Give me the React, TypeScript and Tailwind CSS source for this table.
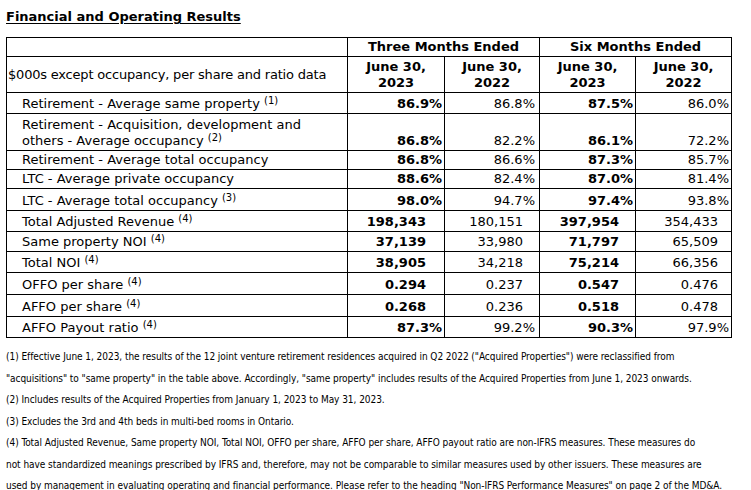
import React from "react";

type Row = {
  label: React.ReactNode;
  sup?: string;
  vals: [string, string, string, string];
  kind: "pct" | "num";
  h: string;
};

const rows: Row[] = [
  { label: "Retirement - Average same property", sup: "(1)", vals: ["86.9%", "86.8%", "87.5%", "86.0%"], kind: "pct", h: "h-[21px]" },
  {
    label: (
      <>
        Retirement - Acquisition, development and
        <br />
        others - Average occupancy
      </>
    ),
    sup: "(2)",
    vals: ["86.8%", "82.2%", "86.1%", "72.2%"],
    kind: "pct",
    h: "h-[37px]",
  },
  { label: "Retirement - Average total occupancy", vals: ["86.8%", "86.6%", "87.3%", "85.7%"], kind: "pct", h: "h-[19px]" },
  { label: "LTC - Average private occupancy", vals: ["88.6%", "82.4%", "87.0%", "81.4%"], kind: "pct", h: "h-[19px]" },
  { label: "LTC - Average total occupancy", sup: "(3)", vals: ["98.0%", "94.7%", "97.4%", "93.8%"], kind: "pct", h: "h-[22px]" },
  { label: "Total Adjusted Revenue", sup: "(4)", vals: ["198,343", "180,151", "397,954", "354,433"], kind: "num", h: "h-[21px]" },
  { label: "Same property NOI", sup: "(4)", vals: ["37,139", "33,980", "71,797", "65,509"], kind: "num", h: "h-[20px]" },
  { label: "Total NOI", sup: "(4)", vals: ["38,905", "34,218", "75,214", "66,356"], kind: "num", h: "h-[21px]" },
  { label: "OFFO per share", sup: "(4)", vals: ["0.294", "0.237", "0.547", "0.476"], kind: "num", h: "h-[22px]" },
  { label: "AFFO per share", sup: "(4)", vals: ["0.268", "0.236", "0.518", "0.478"], kind: "num", h: "h-[22px]" },
  { label: "AFFO Payout ratio", sup: "(4)", vals: ["87.3%", "99.2%", "90.3%", "97.9%"], kind: "pct", h: "h-[21px]" },
];

const pctPad = ["pr-[2px]", "pr-[4px]", "pr-[2px]", "pr-[2px]"];
const numPad = ["pr-[18px]", "pr-[16px]", "pr-[16px]", "pr-[13px]"];

export default function App() {
  return (
    <div className="w-[751px] h-[490px] bg-white text-black overflow-hidden pl-[6px] pt-[9px]" style={{ fontFamily: '"DejaVu Sans", Verdana, sans-serif' }}>
      <div className="text-[13px] font-bold underline leading-[16px] underline-offset-[2px]">Financial and Operating Results</div>
      <table className="mt-[12px] border-collapse table-fixed w-[725px] text-[13px] leading-[16px]">
        <colgroup>
          <col className="w-[341px]" />
          <col className="w-[97px]" />
          <col className="w-[95px]" />
          <col className="w-[96px]" />
          <col className="w-[96px]" />
        </colgroup>
        <tbody>
          <tr className="h-[19px]">
            <td className="border border-black p-0"></td>
            <td colSpan={2} className="border border-black p-0 text-center font-bold align-middle">Three Months Ended</td>
            <td colSpan={2} className="border border-black p-0 text-center font-bold align-middle">Six Months Ended</td>
          </tr>
          <tr className="h-[36px]">
            <td className="border border-black p-0 pl-[1px] align-middle whitespace-nowrap tracking-[-0.2px]">$000s except occupancy, per share and ratio data</td>
            {["2023", "2022", "2023", "2022"].map((y, i) => (
              <td key={i} className="border border-black p-0 text-center font-bold align-middle leading-[16px]">
                June 30,
                <br />
                {y}
              </td>
            ))}
          </tr>
          {rows.map((r, ri) => (
            <tr key={ri} className={r.h}>
              <td className="border border-black p-0 pl-[15px] align-bottom pb-[1px] whitespace-nowrap">
                {r.label}
                {r.sup && (
                  <>
                    {" "}
                    <sup className="text-[10px] leading-none relative -top-[4px]">{r.sup}</sup>
                  </>
                )}
              </td>
              {r.vals.map((v, ci) => (
                <td
                  key={ci}
                  className={`border border-black p-0 text-right align-bottom pb-[1px] ${ci % 2 === 0 ? "font-bold" : ""} ${r.kind === "pct" ? pctPad[ci] : numPad[ci]}`}
                >
                  {v}
                </td>
              ))}
            </tr>
          ))}
        </tbody>
      </table>
      <div
        className="mt-[8px] text-[10px] leading-[21.5px] whitespace-nowrap tracking-[-0.05px]"
        style={{ fontFamily: '"DejaVu Sans Condensed", Tahoma, sans-serif' }}
      >
        <div>(1) Effective June 1, 2023, the results of the 12 joint venture retirement residences acquired in Q2 2022 ("Acquired Properties") were reclassified from</div>
        <div>"acquisitions" to "same property" in the table above. Accordingly, "same property" includes results of the Acquired Properties from June 1, 2023 onwards.</div>
        <div>(2) Includes results of the Acquired Properties from January 1, 2023 to May 31, 2023.</div>
        <div>(3) Excludes the 3rd and 4th beds in multi-bed rooms in Ontario.</div>
        <div>(4) Total Adjusted Revenue, Same property NOI, Total NOI, OFFO per share, AFFO per share, AFFO payout ratio are non-IFRS measures. These measures do</div>
        <div>not have standardized meanings prescribed by IFRS and, therefore, may not be comparable to similar measures used by other issuers. These measures are</div>
        <div>used by management in evaluating operating and financial performance. Please refer to the heading "Non-IFRS Performance Measures" on page 2 of the MD&amp;A.</div>
      </div>
    </div>
  );
}
